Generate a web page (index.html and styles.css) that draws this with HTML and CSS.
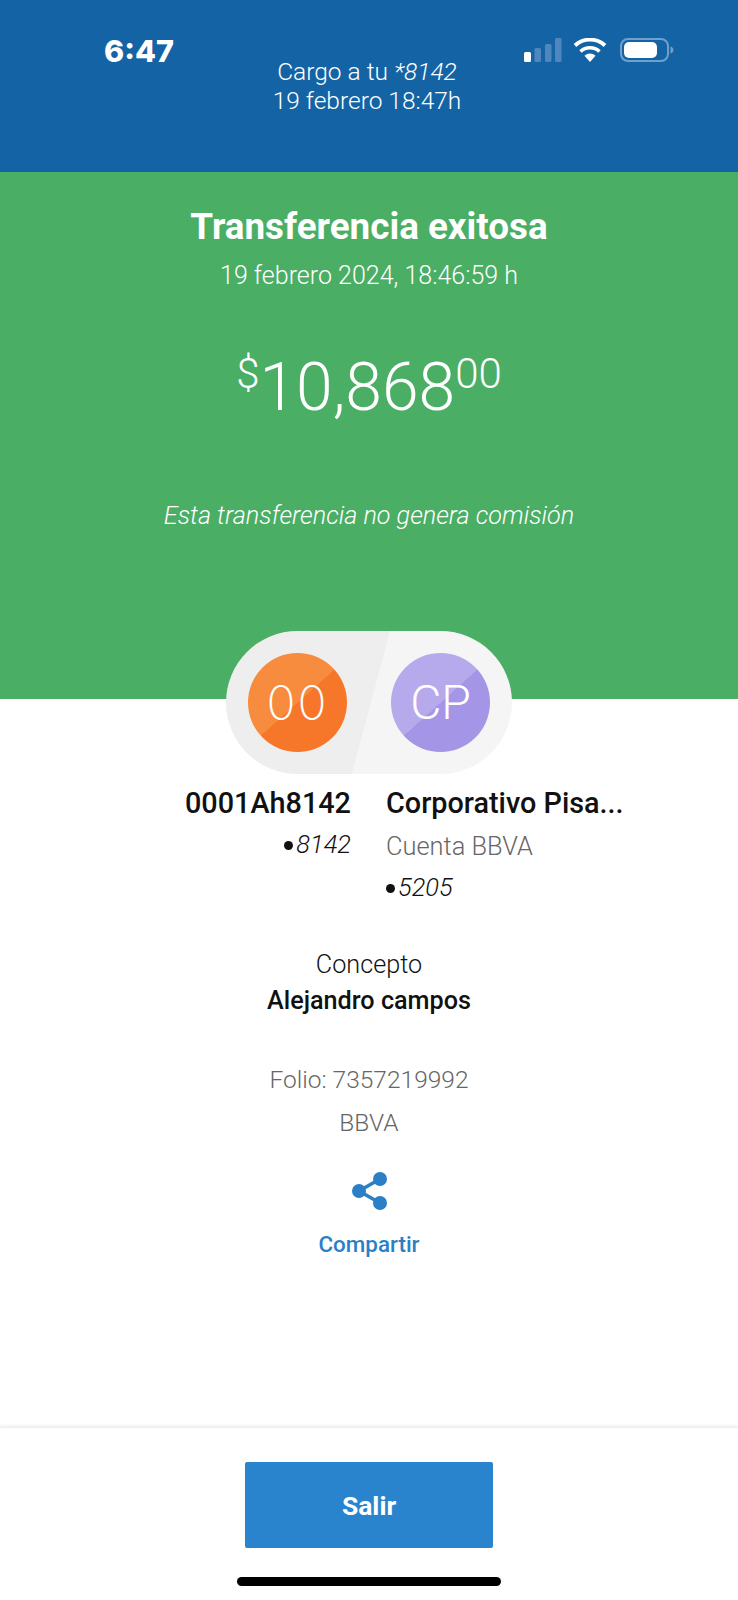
FILE: index.html
```html
<!DOCTYPE html>
<html lang="es">
<head>
    <meta charset="UTF-8">
    <meta name="viewport" content="width=device-width, initial-scale=1.0">
    <title>Transferencia exitosa</title>
    <link rel="stylesheet" href="styles.css">
</head>
<body>

<div class="page">
    <header class="header">
        <div class="status-bar">
            <span class="time">6:47</span>
            <div class="status-icons">
                <svg class="signal" width="38" height="24" viewBox="0 0 38 24">
                    <rect x="0" y="14" width="7" height="10" rx="1.5" fill="#fff"/>
                    <rect x="10.500" y="10" width="6.500" height="14" rx="1.500" fill="#4f86bb"/>
                    <rect x="21" y="6" width="6.500" height="18" rx="1.500" fill="#4f86bb"/>
                    <rect x="31" y="0" width="6.500" height="24" rx="1.500" fill="#4f86bb"/>
                </svg>
                <svg class="wifi" width="34" height="24" viewBox="0 0 34 24">
                    <path d="M17 24l-5.500-6.300a8 8 0 0 1 11 0z" fill="#fff"/>
                    <path d="M7.500 13.500a14 14 0 0 1 19 0" fill="none" stroke="#fff" stroke-width="3.600"/>
                    <path d="M2 7.500a22 22 0 0 1 30 0" fill="none" stroke="#fff" stroke-width="3.800"/>
                </svg>
                <svg class="battery" width="54" height="24" viewBox="0 0 54 24">
                    <rect x="1" y="1" width="47" height="22" rx="7" fill="none" stroke="#6fa0ce" stroke-width="2"/>
                    <rect x="4" y="4" width="33" height="16" rx="5" fill="#fff"/>
                    <path d="M50.500 8.500c2 .6 3 2 3 3.500s-1 2.900-3 3.500z" fill="#6fa0ce"/>
                </svg>
            </div>
        </div>
        <div class="charge">Cargo a tu <em>*8142</em></div>
        <div class="charge">19 febrero 18:47h</div>
    </header>

    <section class="hero">
        <h1>Transferencia exitosa</h1>
        <div class="hero-date">19 febrero 2024, 18:46:59 h</div>
        <div class="amount"><sup>$</sup>10,868<sup>00</sup></div>
        <div class="hero-note">Esta transferencia no genera comisión</div>
    </section>

    <div class="pill">
        <div class="avatar avatar-orange">00</div>
        <div class="avatar avatar-purple">CP</div>
    </div>

    <div class="accounts">
        <div class="account account-from">
            <div class="account-name">0001Ah8142</div>
            <div class="account-num"><span class="dot"></span>8142</div>
        </div>
        <div class="account account-to">
            <div class="account-name">Corporativo Pisa...</div>
            <div class="account-bank">Cuenta BBVA</div>
            <div class="account-num"><span class="dot"></span>5205</div>
        </div>
    </div>

    <div class="concept">
        <div>Concepto</div>
        <strong>Alejandro campos</strong>
    </div>

    <div class="folio">
        <div>Folio: 7357219992</div>
        <div>BBVA</div>
    </div>

    <div class="share">
        <svg width="36" height="40" viewBox="0 0 36 40">
            <path d="M28 8L7 20l21 12" fill="none" stroke="#2a7fc6" stroke-width="3.500"/>
            <circle cx="28" cy="8" r="7" fill="#2a7fc6"/>
            <circle cx="7" cy="20" r="7" fill="#2a7fc6"/>
            <circle cx="28" cy="32" r="7" fill="#2a7fc6"/>
        </svg>
        <span>Compartir</span>
    </div>

    <footer class="footer">
        <button class="exit-btn" type="button">Salir</button>
        <div class="home-bar"></div>
    </footer>
</div>

</body>
</html>
```

FILE: styles.css
```css
html, body {
    margin: 0;
    padding: 0;
}
body {
    font-family: "Roboto", "Liberation Sans", sans-serif;
    background-color: #fff;
    color: #111;
}
.page {
    width: 738px;
    height: 1600px;
    display: flex;
    flex-direction: column;
    overflow: hidden;
}

/* encabezado azul */
.header {
    height: 172px;
    box-sizing: border-box;
    padding-top: 39px;
    background-color: #1464a5;
    color: #fff;
    text-align: center;
}
.status-bar {
    height: 18px;
    padding: 0 64px 0 104px;
    display: flex;
    justify-content: space-between;
    align-items: flex-start;
}
.time {
    font-family: "Inter", sans-serif;
    font-size: 30.500px;
    font-weight: 800;
    line-height: 24px;
}
.status-icons {
    display: flex;
    gap: 13px;
    margin-top: -1px;
}
.status-icons svg {
    display: block;
}
.status-icons .wifi {
    margin-left: -2px;
}
.charge {
    padding-right: 4px;
    font-size: 24.500px;
    font-weight: 300;
    line-height: 29px;
}

/* bloque verde */
.hero {
    height: 527px;
    box-sizing: border-box;
    padding-top: 35px;
    background-color: #4aae65;
    color: #fff;
    text-align: center;
}
.hero h1 {
    margin: 0;
    font-size: 36.800px;
    font-weight: 700;
    line-height: 40px;
}
.hero-date {
    margin-top: 14px;
    font-size: 25px;
    font-weight: 300;
    line-height: 30px;
}
.amount {
    margin-top: 57px;
    font-size: 66px;
    font-weight: 300;
    line-height: 80px;
}
.amount sup {
    font-size: 42px;
    line-height: 0;
    vertical-align: 22px;
}
.hero-note {
    margin-top: 73px;
    font-size: 25.200px;
    font-weight: 300;
    font-style: italic;
    line-height: 30px;
}

/* pastilla con avatares */
.pill {
    align-self: center;
    width: 286px;
    height: 143px;
    margin-top: -68px;
    box-sizing: border-box;
    padding: 0 22px;
    display: flex;
    justify-content: space-between;
    align-items: center;
    border-radius: 72px;
    background: linear-gradient(105deg, #eeeeef 0, #eeeeef 50.500%, #f5f5f6 50.700%);
}
.avatar {
    width: 99px;
    height: 99px;
    border-radius: 50%;
    color: #fff;
    font-size: 48px;
    font-weight: 300;
    line-height: 99px;
    text-align: center;
}
.avatar-orange {
    font-family: "Inter", sans-serif;
    font-size: 48px;
    font-weight: 200;
    letter-spacing: 2px;
    background: linear-gradient(138deg, #f88c3e 0, #f88c3e 50%, #f7772a 50.200%);
}
.avatar-purple {
    background: linear-gradient(138deg, #b6a9ec 0, #b6a9ec 50%, #a495e6 50.200%);
}

/* cuentas */
.accounts {
    display: flex;
    margin-top: 12px;
}
.account-from {
    width: 351px;
    text-align: right;
}
.account-to {
    margin-left: 35px;
}
.account-name {
    font-size: 28.800px;
    font-weight: 500;
    line-height: 34px;
}
.account-num {
    font-size: 25.400px;
    font-weight: 300;
    font-style: italic;
    line-height: 32px;
    margin-top: 8px;
}
.account-bank {
    font-size: 25.400px;
    font-weight: 300;
    color: #666;
    line-height: 32px;
    margin-top: 10px;
}
.account-to .account-num {
    margin-top: 9px;
}
.dot {
    display: inline-block;
    width: 9px;
    height: 9px;
    margin-right: 3px;
    border-radius: 50%;
    background-color: #111;
    vertical-align: 3px;
}

.concept {
    margin-top: 44px;
    text-align: center;
    font-size: 25.200px;
    font-weight: 300;
    line-height: 36px;
}
.concept strong {
    display: block;
    font-weight: 500;
}
.folio {
    margin-top: 39px;
    text-align: center;
    color: #666;
    font-size: 24.500px;
    font-weight: 300;
    line-height: 43px;
}
.share {
    margin-top: 27px;
    display: flex;
    flex-direction: column;
    align-items: center;
    color: #2a7fc6;
    font-size: 22.400px;
    font-weight: 500;
}
.share svg {
    display: block;
    margin-bottom: 20px;
    transform: translateX(1px);
}

/* pie */
.footer {
    margin-top: auto;
    height: 173px;
    box-sizing: border-box;
    padding-top: 34px;
    border-top: 1px solid #eee;
    box-shadow: 0 -2px 3px rgba(0, 0, 0, 0.05);
    display: flex;
    flex-direction: column;
    align-items: center;
}
.exit-btn {
    width: 248px;
    height: 86px;
    background-color: #2a84cd;
    color: #fff;
    border: none;
    border-radius: 2px;
    font-family: inherit;
    font-size: 26.500px;
    font-weight: 700;
}
.home-bar {
    width: 264px;
    height: 9px;
    margin-top: 29px;
    border-radius: 5px;
    background-color: #000;
}
```
